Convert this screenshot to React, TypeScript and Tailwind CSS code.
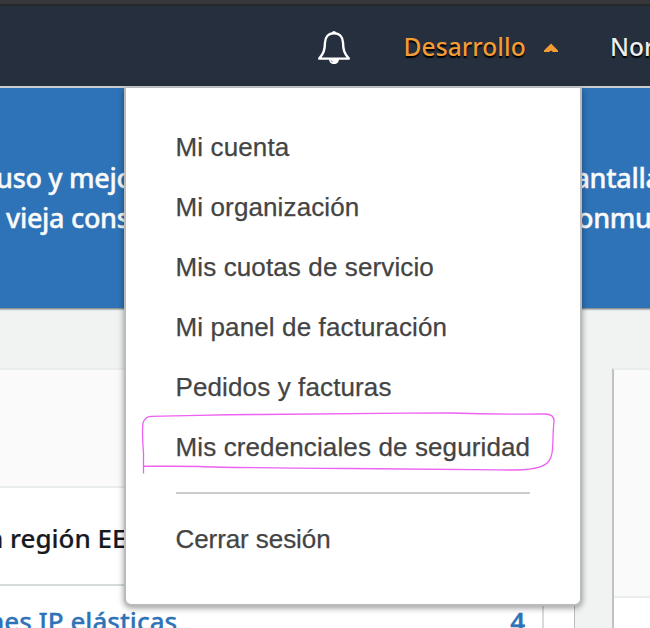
const accountLinks = [
  "Mi cuenta",
  "Mi organización",
  "Mis cuotas de servicio",
  "Mi panel de facturación",
  "Pedidos y facturas",
  "Mis credenciales de seguridad",
];

function BellIcon() {
  return (
    <svg className="mt-[5px] h-[36px] w-[34px] shrink-0" viewBox="0 0 34 36" fill="none">
      <path
        d="M17 3.2C11.5 3.2 8.2 7 8 12.5C7.8 20 6.8 23.500 2.200 28.600H31.800C27.200 23.500 26.200 20 26 12.500C25.800 7 22.500 3.200 17 3.200Z"
        stroke="#fff"
        strokeWidth="2.4"
        strokeLinejoin="round"
      />
      <path d="M15 3C15 .3 19 .3 19 3Z" fill="#fff" />
      <path d="M12 29H22C22 32 20 34 17 34S12 32 12 29Z" fill="#fff" />
      <path d="M13.800 30.500L15.700 32" stroke="#263040" strokeWidth=".7" />
    </svg>
  );
}

function Header() {
  return (
    <header className="flex h-[88px] items-center border-t-4 border-b-2 border-t-[#37373a] border-b-[#cbcccd] bg-[#262f3e] pl-[317px] font-['Noto_Sans',sans-serif] text-[24.500px] whitespace-nowrap shadow-[inset_0_2px_0_#262728]">
      <BellIcon />
      <span className="mt-[4px] ml-[52.500px] w-[125.500px] shrink-0 font-medium tracking-[0.1px] text-[#f39c34] [text-shadow:0_2px_1px_#000]">
        Desarrollo
      </span>
      <svg className="mt-[6px] ml-[14px] h-[10px] w-[16px] shrink-0" viewBox="0 0 16 10">
        <path d="M8 .500L15 7.500V9H10L8 7.500L6 9H1V7.500Z" fill="#f39c34" />
      </svg>
      <span className="mt-[4px] ml-[51px] shrink-0 font-medium text-[#eee] [text-shadow:0_2px_1px_#000]">Norte</span>
    </header>
  );
}

function Banner() {
  return (
    <section className="flex h-[220px] justify-between overflow-hidden bg-[#2e73b7] pt-[70px] font-['Noto_Sans',sans-serif] text-[27px] leading-[40px] font-medium tracking-[-0.3px] whitespace-nowrap text-[#fafafa] [-webkit-text-stroke:0.4px_#fafafa]">
      <div className="w-[140px] overflow-hidden">
        <p className="-ml-[4px]">uso y mejore</p>
        <p className="ml-[6px]">vieja consola</p>
      </div>
      <div className="w-[90px]">
        <p className="ml-[-2px]">pantalla de</p>
        <p className="ml-[4px]">conmutar</p>
      </div>
    </section>
  );
}

function Dashboard() {
  return (
    <main className="flex h-[320px] justify-between bg-[#f1f3f3] pt-[60px] shadow-[inset_0_1px_0_#8d9496,inset_0_2px_0_#bcc0c1,inset_0_3px_0_#e4e7e7]">
      <section className="w-[575px] border-t-2 border-r border-t-[#eaeded] border-r-[#b9bdbe] bg-white font-['Noto_Sans',sans-serif] whitespace-nowrap">
        <div className="h-[118px] border-b-2 border-[#eaeded] bg-[#fafafa]" />
        <div className="h-[98px] overflow-hidden border-b-2 border-[#d5dbdb] pt-[30px] text-[26px] leading-[40px] text-[#16191f]">
          <p className="-ml-[13px] font-medium [-webkit-text-stroke:0.2px_#16191f]">n región EE.UU.</p>
        </div>
        <div className="flex h-[42px] w-[544px] justify-between overflow-hidden border-r-2 border-[#d5dbdb] pt-[15px] pr-[17px] text-[26px] leading-[40px] font-medium text-[#2e73b7] [-webkit-text-stroke:0.3px_#2e73b7]">
          <p className="-ml-[12px]">nes IP elásticas</p>
          <p className="font-semibold">4</p>
        </div>
      </section>
      <section className="w-[38px] border-t-2 border-l-2 border-t-[#eaeded] border-l-[#bfc2c3] bg-white">
        <div className="h-[228px] border-b-2 border-[#eaeded] bg-[#fafafa]" />
      </section>
    </main>
  );
}

function AccountMenu() {
  return (
    <nav className="absolute top-[88px] left-[124px] h-[518px] w-[458px] rounded-b-[7px] border-2 border-t-0 border-[#bbb] bg-white px-[50px] pt-[29px] font-['Liberation_Sans',Arial,sans-serif] text-[26px] leading-[60px] whitespace-nowrap text-[#444] shadow-[0_2px_6px_rgba(0,0,0,0.4)]">
      {accountLinks.map((label) => (
        <a key={label} className="-ml-[0.5px] block h-[60px] tracking-[0.12px] [-webkit-text-stroke:0.25px_#444]">
          {label}
        </a>
      ))}
      <hr className="mt-[15px] mb-[15px] border-t-2 border-[#ccc]" />
      <a className="-ml-[0.5px] block h-[60px] tracking-[-0.08px] [-webkit-text-stroke:0.25px_#444]">Cerrar sesión</a>
      <svg
        className="pointer-events-none absolute top-[320px] left-[14px] h-[70px] w-[420px]"
        viewBox="140 408 420 70"
        fill="none"
      >
        <path
          d="M143.500 473.500V453C142.500 440 142 430 143 423Q145 416.500 151 416.300C200 416 205 414.500 260 414.500C340 413.500 390 413 450 413C500 414.500 510 414 545 414Q554 414 554 421C552 440 554 449 551 457C548 467 535 469.500 515 470C470 470 430 469 350 468.500C270 468 220 467.500 200 466.500L143.500 466"
          stroke="#ed61f3"
          strokeWidth="1.300"
        />
      </svg>
    </nav>
  );
}

export default function App() {
  return (
    <div className="relative h-[628px] w-[650px] overflow-hidden">
      <Header />
      <Banner />
      <Dashboard />
      <AccountMenu />
    </div>
  );
}
